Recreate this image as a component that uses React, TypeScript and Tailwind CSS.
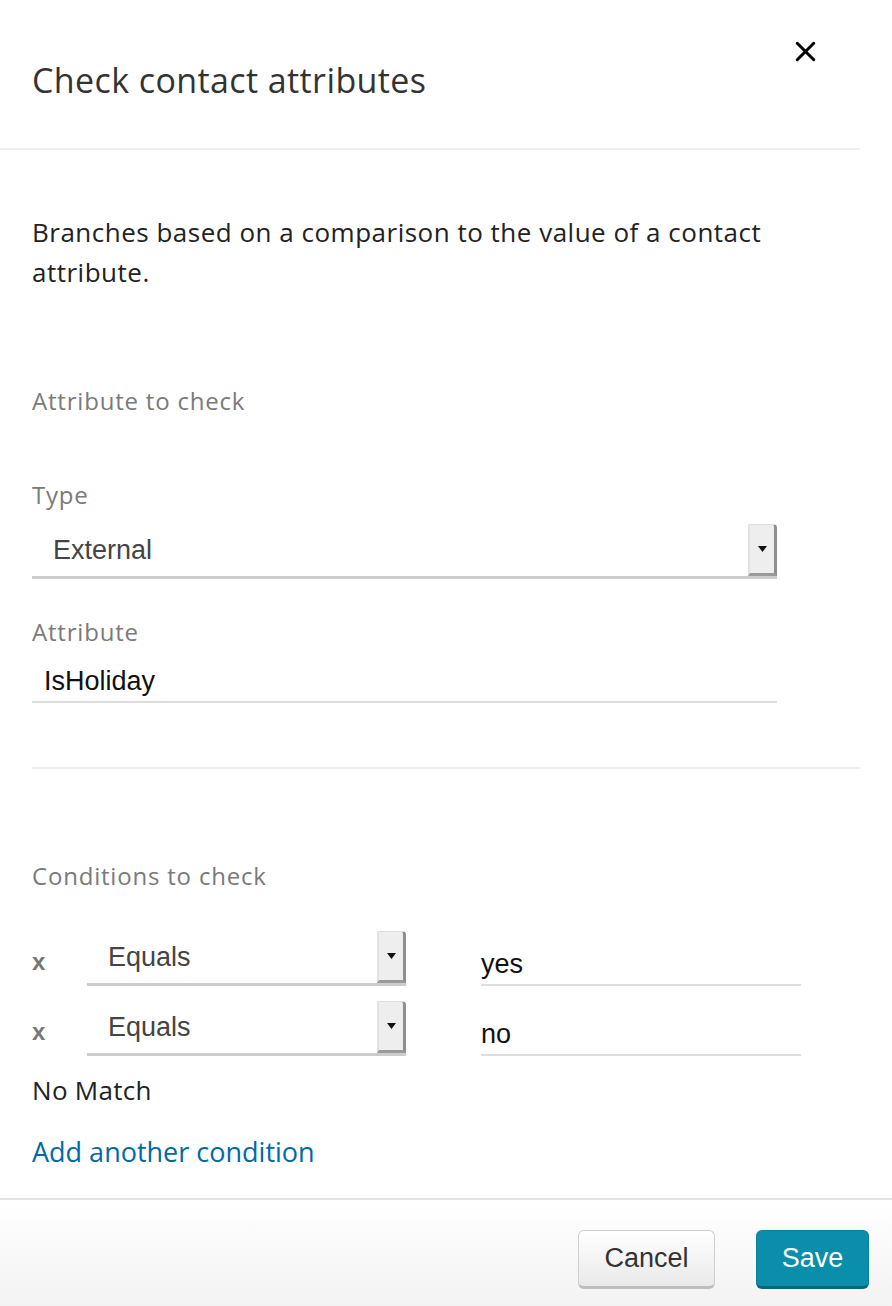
import { X } from "lucide-react"

const ember = "font-['Open_Sans','Noto_Sans',sans-serif]"
const helv = "font-['Liberation_Sans',Arial,sans-serif]"
const label = "text-[24px] leading-[30px] tracking-[0.8px] text-[#7a7a7a]"

function Arrow() {
  return (
    <div className="w-[29px] h-full bg-[#eeeeee] border-l-2 border-l-[#e2e2e2] border-r-[3px] border-r-[#8f8f8f] border-b-[3px] border-b-[#9a9a9a] border-t border-t-[#dddddd] rounded-tr-[4px] flex items-center justify-center">
      <svg width="9" height="6" viewBox="0 0 9 6">
        <path d="M0 0 H9 L4.5 6 Z" fill="#111" />
      </svg>
    </div>
  )
}

function Select({ value, width, indent }: { value: string; width: string; indent: string }) {
  return (
    <div className={`${width} h-[55px] flex items-stretch border-b-[3px] border-[#cccccc]`}>
      <div className={`flex-1 flex items-center ${indent} ${helv} text-[27px] text-[#444]`}>{value}</div>
      <Arrow />
    </div>
  )
}

function TextInput({ value, width, indent }: { value: string; width: string; indent: string }) {
  return (
    <div className={`${width} h-[42px] flex items-center border-b-2 border-[#dddddd] ${indent} ${helv} text-[27px] text-[#111]`}>
      {value}
    </div>
  )
}

function ConditionRow({ value }: { value: string }) {
  return (
    <div className="flex items-end">
      <span className={`w-[55px] ${helv} font-bold text-[24px] text-[#777] pb-[6px]`}>x</span>
      <Select value="Equals" width="w-[319px]" indent="pl-[21px]" />
      <div className="w-[75px]" />
      <TextInput value={value} width="w-[320px]" indent="pl-0" />
    </div>
  )
}

export default function App() {
  return (
    <div className={`w-[892px] h-[1306px] bg-white flex flex-col ${ember}`}>
      <div className="w-[860px] h-[150px] border-b-2 border-[#eeeeee] flex justify-between items-start pl-8 pr-[38px]">
        <h1 className="mt-[58px] text-[34px] leading-[44px] tracking-[0.4px] text-[#333]">Check contact attributes</h1>
        <button className="mt-[35px] text-black">
          <X size={33} strokeWidth={2.2} />
        </button>
      </div>

      <div className="flex-1 pl-8 pr-8">
        <p className="mt-[62px] max-w-[780px] text-[26px] leading-[40px] tracking-[0.5px] text-[#222]">
          Branches based on a comparison to the value of a contact attribute.
        </p>

        <div className={`mt-[94px] ${label}`}>Attribute to check</div>

        <div className={`mt-[64px] ${label}`}>Type</div>
        <Select value="External" width="w-[745px] mt-[14px]" indent="pl-[21px]" />

        <div className={`mt-[38px] ${label}`}>Attribute</div>
        <TextInput value="IsHoliday" width="w-[745px] mt-[14px]" indent="pl-[12px]" />

        <div className="mt-[64px] border-b-2 border-[#eeeeee]" />

        <div className={`mt-[92px] ${label}`}>Conditions to check</div>

        <div className="mt-[40px] flex flex-col gap-[15px]">
          <ConditionRow value="yes" />
          <ConditionRow value="no" />
        </div>

        <div className="mt-[17px] text-[26px] leading-[34px] tracking-[0.3px] text-[#222]">No Match</div>
        <div className="mt-[28px] text-[27px] leading-[34px] text-[#006aa6]">Add another condition</div>
      </div>

      <div className="h-[108px] border-t-2 border-[#e2e2e2] bg-gradient-to-b from-white to-[#f3f3f3] flex items-start justify-end gap-[41px] pr-[23px] pt-[30px]">
        <button className={`w-[137px] h-[59px] rounded-[6px] border border-[#cfcfcf] border-b-[3px] border-b-[#bdbdbd] bg-gradient-to-b from-white to-[#e9e9e9] ${helv} text-[27px] text-[#333]`}>
          Cancel
        </button>
        <button className={`w-[113px] h-[59px] rounded-[6px] border border-[#0a7f99] border-b-[3px] border-b-[#08677d] bg-[#0a8eab] ${helv} text-[27px] text-white`}>
          Save
        </button>
      </div>
    </div>
  )
}
